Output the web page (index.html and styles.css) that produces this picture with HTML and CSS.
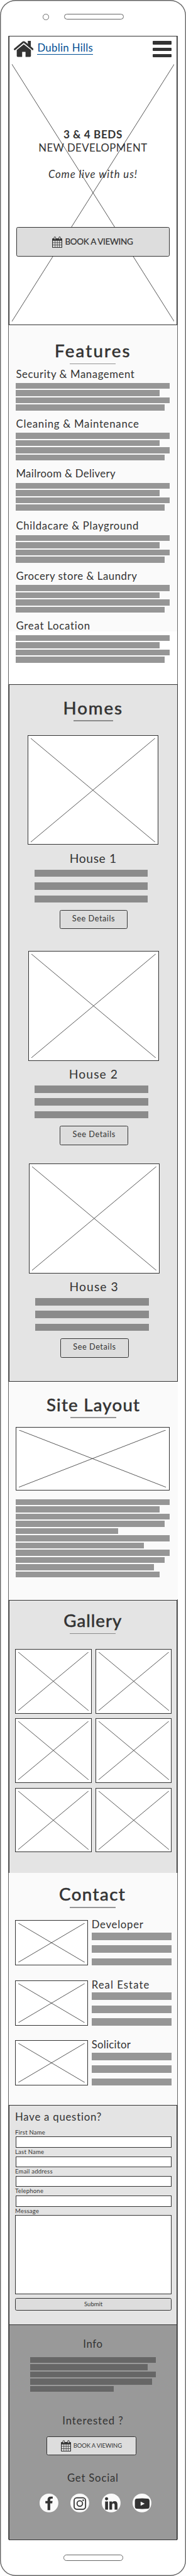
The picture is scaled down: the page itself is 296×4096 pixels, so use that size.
FILE: index.html
```html
<!DOCTYPE html>
<html lang="en">
<head>
<meta charset="utf-8">
<title>Dublin Hills</title>
<link rel="stylesheet" href="styles.css">
</head>
<body>
<svg class="defs" aria-hidden="true">
  <symbol id="cross"><line x1="0" y1="0" x2="100%" y2="100%"/><line x1="100%" y1="0" x2="0" y2="100%"/></symbol>
  <symbol id="calendar" viewBox="0 0 22 25">
    <path d="M1.5 4H20.500Q22 4 22 5.500V23.500Q22 25 20.500 25H1.500Q0 25 0 23.500V5.500Q0 4 1.500 4Z" fill="#333"/>
    <path d="M1.600 9.200H6V13H1.600ZM7 9.200H10.700V13H7ZM11.700 9.200H15.300V13H11.700ZM16.300 9.200H20.400V13H16.300ZM1.600 14H6V18H1.600ZM7 14H10.700V18H7ZM11.700 14H15.300V18H11.700ZM16.300 14H20.400V18H16.300ZM1.600 19H6V23.300H1.600ZM7 19H10.700V23.300H7ZM11.700 19H15.300V23.300H11.700ZM16.300 19H20.400V23.300H16.300Z" fill="#ddd"/>
    <rect x="4.300" y=".7" width="3.400" height="6" rx="1.700" fill="#ddd" stroke="#333" stroke-width="1.300"/>
    <rect x="14.700" y=".7" width="3.400" height="6" rx="1.700" fill="#ddd" stroke="#333" stroke-width="1.300"/>
  </symbol>
</svg>
<div class="phone">
  <div class="bezel-top"><span class="camera"></span><span class="speaker"></span></div>
  <div class="screen">
    <header class="header">
      <svg class="logo" viewBox="0 0 43.400 35"><path d="M21.700 7.500L37.400 20V33Q37.400 35 35.400 35H25.600V24H18.200V35H8.400Q6.400 35 6.400 33V20Z" fill="#333"/><path d="M2 18.300L20 3.200Q21.700 1.900 23.400 3.200L41.400 18.300" fill="none" stroke="#333" stroke-width="3.800" stroke-linecap="round"/><path d="M30.600 0H37.200V13L30.600 7.500Z" fill="#333"/></svg>
      <a class="brand">Dublin Hills</a>
      <div class="burger"><i></i><i></i><i></i></div>
    </header>

    <section class="hero">
      <svg class="ph hero-ph"><use href="#cross"/></svg>
      <div class="hero-copy">
        <strong>3 &amp; 4 BEDS</strong>
        <span class="dev">NEW DEVELOPMENT</span>
        <em>Come live with us!</em>
        <button class="btn book"><svg class="cal"><use href="#calendar"/></svg>BOOK A VIEWING</button>
      </div>
    </section>

    <section class="features">
      <h2 class="t-features">Features</h2>
      <article><h3 class="f1">Security &amp; Management</h3><div class="bars"><i></i><i class="w313"></i><i></i><i class="w324"></i></div></article>
      <article><h3 class="f2">Cleaning &amp; Maintenance</h3><div class="bars"><i></i><i class="w313"></i><i></i><i class="w324"></i></div></article>
      <article class="tall"><h3 class="f3">Mailroom &amp; Delivery</h3><div class="bars"><i></i><i class="w313"></i><i></i><i class="w324"></i></div></article>
      <article><h3 class="f4">Childacare &amp; Playground</h3><div class="bars"><i></i><i class="w313"></i><i></i><i class="w324"></i></div></article>
      <article><h3 class="f5">Grocery store &amp; Laundry</h3><div class="bars"><i></i><i class="w313"></i><i></i><i class="w324"></i></div></article>
      <article><h3 class="f6">Great Location</h3><div class="bars last"><i></i><i class="w313"></i><i></i><i class="w324"></i></div></article>
    </section>

    <section class="homes">
      <h2 class="t-homes">Homes</h2>
      <article class="house house-1"><svg class="ph"><use href="#cross"/></svg><h3>House 1</h3><div class="lines"><i></i><i></i><i></i></div><button class="btn details">See Details</button></article>
      <article class="house house-2"><svg class="ph"><use href="#cross"/></svg><h3>House 2</h3><div class="lines"><i></i><i></i><i></i></div><button class="btn details">See Details</button></article>
      <article class="house house-3"><svg class="ph"><use href="#cross"/></svg><h3>House 3</h3><div class="lines"><i></i><i></i><i></i></div><button class="btn details">See Details</button></article>
    </section>

    <section class="site">
      <h2 class="t-site">Site Layout</h2>
      <svg class="ph site-ph"><use href="#cross"/></svg>
      <div class="bars"><i></i><i class="w313"></i><i></i><i class="w324"></i><i class="w223"></i><i></i><i class="w279"></i><i></i><i class="w324"></i><i class="w301"></i><i class="w313"></i></div>
    </section>

    <section class="gallery">
      <h2 class="t-gallery">Gallery</h2>
      <div class="grid">
        <svg class="ph"><use href="#cross"/></svg><svg class="ph"><use href="#cross"/></svg>
        <svg class="ph"><use href="#cross"/></svg><svg class="ph"><use href="#cross"/></svg>
        <svg class="ph"><use href="#cross"/></svg><svg class="ph"><use href="#cross"/></svg>
      </div>
    </section>

    <section class="contact">
      <h2 class="t-contact">Contact</h2>
      <article><svg class="ph"><use href="#cross"/></svg><div><h3 class="c1">Developer</h3><div class="lines"><i></i><i></i><i></i></div></div></article>
      <article><svg class="ph"><use href="#cross"/></svg><div><h3 class="c2">Real Estate</h3><div class="lines"><i></i><i></i><i></i></div></div></article>
      <article><svg class="ph"><use href="#cross"/></svg><div><h3 class="c3">Solicitor</h3><div class="lines"><i></i><i></i><i></i></div></div></article>
    </section>

    <form class="question">
      <h3>Have a question?</h3>
      <label>First Name</label><div class="input"></div>
      <label>Last Name</label><div class="input"></div>
      <label>Email address</label><div class="input"></div>
      <label>Telephone</label><div class="input"></div>
      <label>Message</label><div class="input message"></div>
      <button type="button" class="btn submit">Submit</button>
    </form>

    <footer class="footer">
      <h3 class="info">Info</h3>
      <div class="bars dark"><i></i><i class="w257"></i><i></i><i class="w266"></i><i class="w183"></i></div>
      <h3 class="interested">Interested ?</h3>
      <button class="btn book-small"><svg class="cal"><use href="#calendar"/></svg>BOOK A VIEWING</button>
      <h3 class="get-social">Get Social</h3>
      <div class="social">
        <svg viewBox="0 0 41 41"><circle cx="20.500" cy="20.500" r="20.500" fill="#fafafa"/><path d="M17.400 36V21.300H12.700V16.300H17.400V13.500Q17.400 6.400 24.500 6.400H28.700V11H25.500Q23.200 11 23.200 13.300V16.300H28.300L27.600 21.300H23.200V36Z" fill="#333"/></svg>
        <svg viewBox="0 0 41 41"><circle cx="20.500" cy="20.500" r="20.500" fill="#fafafa"/><g fill="none" stroke="#333" stroke-width="2.400"><rect x="8.200" y="9" width="25" height="25.200" rx="6"/><circle cx="20.600" cy="21.600" r="6"/></g><circle cx="28" cy="14.500" r="1.800" fill="#333"/></svg>
        <svg viewBox="0 0 41 41"><circle cx="20.500" cy="20.500" r="20.500" fill="#fafafa"/><circle cx="10.400" cy="11.300" r="3.400" fill="#333"/><path d="M7.300 17H13.600V35H7.300ZM16.600 17H22.200V19.300Q24 16.500 27.700 16.500Q34.200 16.500 34.200 24V35H28V25.200Q28 21.300 25.400 21.300Q22.500 21.300 22.500 25.200V35H16.600Z" fill="#333"/></svg>
        <svg viewBox="0 0 41 41"><circle cx="20.500" cy="20.500" r="20.500" fill="#fafafa"/><path d="M9 11Q21 9.600 33 11Q37 11.300 37 16V27.500Q37 32.700 33 33Q21 34.200 9 33Q5 32.700 5 27.500V16Q5 11.300 9 11Z" fill="#333"/><path d="M17.600 17.600L26.500 22L17.600 26.400Z" fill="#fafafa"/></svg>
      </div>
    </footer>
  </div>
  <div class="bezel-bottom"><span class="speaker"></span></div>
</div>
</body>
</html>
```
FILE: styles.css
```css
/* 1rem is ten wireframe units */
html { font-size: 7.2857px; background: #fff; }
* { box-sizing: border-box; margin: 0; padding: 0; }
body { font-family: Lato, "Open Sans", sans-serif; font-size: 2.3rem; line-height: 1.2; color: #333; overflow: hidden; }
i { display: block; }
.defs { display: block; width: 0; height: 0; }

.phone { width: 296px; height: 562.2rem; border-radius: 3.4rem; background: #fff; box-shadow: inset 0 0 0 1.4px #666; }
.bezel-top { height: 7.8rem; padding: 3rem 0 0 9.35rem; display: flex; align-items: flex-start; gap: 3.35rem; }
.camera { width: 1.3rem; height: 1.3rem; margin-top: .05rem; border: 1px solid #666; border-radius: 50%; }
.speaker { display: block; width: 13.05rem; height: 1.3rem; border: 1px solid #666; border-radius: .65rem; }
.bezel-bottom { padding: 3.3rem 0 0 13.9rem; }
.screen { width: 37rem; height: 546.5rem; margin-left: 1.8rem; padding: 0 .1rem; background: #fff; box-shadow: inset 0 0 0 1px #666; }

h2, h3 { font-weight: 400; white-space: nowrap; }
h2 { font-size: 3.8rem; text-align: center; -webkit-text-stroke: .022em #333; height: 5.25rem; margin-bottom: 0; display: flex; flex-direction: column; align-items: center; justify-content: space-between; line-height: 4.56rem; }
h2::after { content: ""; width: 10rem; height: .2rem; background: #969696; flex: none; }
h3 { font-size: 2.3rem; line-height: 2.76rem; letter-spacing: .035em; }

.ph { display: block; padding: .5rem; border: 1px solid #333; background: #fff; stroke: #444; stroke-width: .9px; }
.btn { appearance: none; display: flex; align-items: center; justify-content: center; border: 1px solid #333; border-radius: .35rem; background: #ddd; color: #333; font: inherit; white-space: nowrap; }
.cal { width: 2.2rem; height: 2.5rem; flex: none; }

.header { height: 5.8rem; padding: 0 1.1rem 0 .93rem; display: flex; align-items: flex-start; border: 1px solid #333; border-bottom: 1.5px solid #333; background: #fff; }
.logo { width: 4.34rem; height: 3.5rem; margin-top: 1rem; }
.brand { margin: 1.15rem 0 0 .75rem; width: 12.25rem; height: 2.8rem; line-height: 2.76rem; padding-left: .1rem; white-space: nowrap; letter-spacing: .02em; color: #004f94; border-bottom: 1px solid #004f94; }
.burger { width: 4.1rem; margin: 1.05rem 0 0 auto; display: grid; gap: .68rem; }
.burger i { height: .7rem; border-radius: .15rem; background: #333; }

.hero { height: 57.3rem; display: grid; }
.hero-ph, .hero-copy { grid-area: 1 / 1; }
.hero-ph { width: 100%; height: 57.4rem; margin-top: -.1rem; border-top: 0; }
.hero-copy { display: flex; flex-direction: column; align-items: center; padding-top: 14.35rem; z-index: 1; }
.hero-copy strong { line-height: 2.76rem; font-size: 2.35rem; letter-spacing: .034em; }
.dev { line-height: 2.76rem; margin-top: .2rem; letter-spacing: .026em; }
.hero-copy em { line-height: 2.76rem; margin-top: 2.94rem; letter-spacing: .054em; }
.book { width: 33.5rem; height: 6.4rem; margin-top: 10.24rem; margin-left: -.1rem; gap: .55rem; font-size: 1.85rem; letter-spacing: -.022em; padding-bottom: .3rem; -webkit-text-stroke: .015em #333; }
.book .cal { margin-top: .3rem; }

.features { height: 78.4rem; padding: 3.35rem 1.6rem 0; background: linear-gradient(#fafafa 66.9rem, #fff 0); }
.features h2 { margin-bottom: .73rem; }
article { display: block; }
.features article { height: 10.9rem; }
.features .tall { height: 11.4rem; }
.bars { display: grid; grid-auto-rows: 1.3rem; row-gap: .28rem; width: 33.5rem; margin-top: .6rem; }
.bars i { background: #969696; }
.w313 { width: 31.3rem; } .w324 { width: 32.4rem; } .w301 { width: 30.1rem; }
.w279 { width: 27.9rem; } .w223 { width: 22.3rem; }
.w257 { width: 25.7rem; } .w266 { width: 26.6rem; } .w183 { width: 18.3rem; }
.f2 { letter-spacing: .045em; } .f3 { letter-spacing: .02em; } .f4 { letter-spacing: .04em; }
.f5 { letter-spacing: .033em; } .f6 { letter-spacing: .045em; }
.t-features { letter-spacing: .08em; }
.t-homes { letter-spacing: .07em; }
.t-site { letter-spacing: .045em; }
.t-gallery { letter-spacing: .037em; }
.t-contact { letter-spacing: .053em; }

.homes { width: 36.9rem; height: 152.3rem; padding-top: 2.88rem; background: #e4e4e4; box-shadow: inset 0 0 0 1px #333; }
.homes h2 { height: 5.2rem; }
.homes h2::after { width: 8.7rem; background: #8b8b8b; }
.house { display: flex; flex-direction: column; align-items: flex-start; width: 28.5rem; margin-left: 4.2rem; }
.house-1 { margin-top: 3.02rem; height: 47.1rem; }
.house-2 { margin-left: 4.3rem; height: 46.4rem; }
.house-3 { margin-left: 4.4rem; }
.house .ph { width: 28.5rem; height: 24rem; flex: none; }
.house h3 { align-self: center; margin: 1.27rem 0 .95rem; font-size: 2.65rem; line-height: 3.18rem; letter-spacing: .055em; }
.house-1 h3 { letter-spacing: .03em; }
.lines { display: grid; grid-auto-rows: 1.6rem; row-gap: 1.2rem; width: 24.8rem; }
.house .lines { margin-left: 1.4rem; }
.lines i { background: #8b8b8b; }
.details { width: 14.9rem; height: 4.2rem; margin: 1.6rem 0 0 6.9rem; padding-bottom: .4rem; font-size: 1.75rem; letter-spacing: .042em; }

.site { width: 36.9rem; height: 47.4rem; margin-bottom: .2rem; padding: 2.65rem 0 0 1.6rem; background: #fafafa; }
.site h2 { width: 33.8rem; }
.site-ph { width: 33.5rem; height: 13.8rem; margin-top: 2rem; }
.site .bars { margin-top: 1.9rem; }

.gallery { height: 59.5rem; padding: 2.17rem 1.2rem 0 1.4rem; background: #e4e4e4; box-shadow: inset 1px 1px #333, inset -1px 0 #333; }
.gallery h2 { width: 34rem; }
.gallery h2::after { background: #8b8b8b; }
.grid { display: grid; grid-template-columns: 16.7rem 16.7rem; grid-auto-rows: 14.1rem; gap: 1.05rem .8rem; margin-top: 3.28rem; }
.grid .ph { width: 100%; height: 100%; }

.contact { height: 50.7rem; padding: 2.45rem 1.2rem 0 1.4rem; background: #fafafa; }
.contact h2 { width: 33.8rem; margin-bottom: 2.7rem; }
.contact article { display: flex; gap: .8rem; height: 13.1rem; }
.contact .ph { width: 15.9rem; height: 9.9rem; }
.contact h3 { margin: -.4rem 0 .34rem; }
.contact .lines { width: 17.5rem; }
.contact .lines i { background: #969696; }
.c1 { letter-spacing: .044em; } .c2 { letter-spacing: .062em; } .c3 { letter-spacing: .016em; }

.question { height: 48.1rem; padding: 1.3rem 1.2rem 0 1.4rem; background: #e4e4e4; border-bottom: 1.5px solid #333; box-shadow: inset 1px 1px #333, inset -1px 0 #333; }
.question h3 { margin-bottom: 1.09rem; letter-spacing: .046em; }
.question label { display: block; height: 1.75rem; font-size: 1.3rem; line-height: 1.56rem; letter-spacing: .026em; }
.input { height: 2.4rem; margin: 0 0 .15rem .1rem; border: 1px solid #333; background: #fff; }
.input.message { height: 17.3rem; margin: 0 0 .8rem; }
.submit { width: 100%; height: 2.7rem; padding-bottom: .25rem; font-size: 1.3rem; }

.footer { height: 46.9rem; padding-top: 2.72rem; display: flex; flex-direction: column; align-items: center; background: #999; box-shadow: inset 1px 0 #333, inset -1px -1px #333; }
.dark { width: 27.5rem; margin-top: 1.42rem; }
.dark i { background: #666; }
.interested { margin-top: 4.9rem; letter-spacing: .054em; }
.book-small { width: 19.7rem; height: 4.1rem; margin: 2.1rem .7rem 0 0; gap: .55rem; padding-bottom: .25rem; font-size: 1.3rem; letter-spacing: -.013em; }
.book-small .cal { margin-top: .25rem; }
.get-social { margin-top: 3.5rem; letter-spacing: .047em; }
.social { display: flex; gap: 2.7rem; margin: 2.1rem 0 0 1.1rem; }
.social svg { width: 4.1rem; height: 4.1rem; }
```
